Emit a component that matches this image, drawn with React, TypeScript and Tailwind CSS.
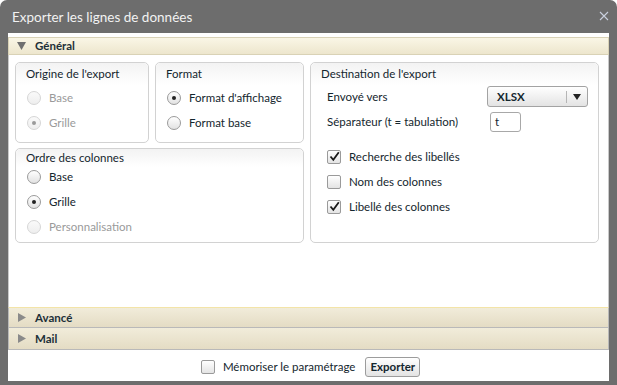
import React from "react";

const F = { fontFamily: "Lato, 'Open Sans', sans-serif" };

function Radio({ checked, disabled }: { checked?: boolean; disabled?: boolean }) {
  return (
    <span
      className={
        "w-[14px] h-[14px] rounded-full border flex items-center justify-center shrink-0 " +
        (disabled
          ? "border-[#d6d6d6] bg-gradient-to-b from-[#fafafa] to-[#eeeeee]"
          : "border-[#9a9a9a] bg-gradient-to-b from-[#ffffff] to-[#e2e2e2]")
      }
    >
      {checked && (
        <span className={"w-[4px] h-[4px] rounded-full " + (disabled ? "bg-[#9a9a9a]" : "bg-[#222]")} />
      )}
    </span>
  );
}

function Check({ checked }: { checked?: boolean }) {
  return (
    <span className="w-[14px] h-[14px] rounded-[2px] border border-[#9a9a9a] bg-gradient-to-b from-[#ffffff] to-[#e4e4e4] flex items-center justify-center shrink-0">
      {checked && (
        <svg width="11" height="11" viewBox="0 0 11 11">
          <path d="M1.5 5.5 L4.3 8.8 L9.8 1.2" fill="none" stroke="#1a1a1a" strokeWidth="1.8" />
        </svg>
      )}
    </span>
  );
}

function Group({ title, className, children, titleH = "h-[22px]" }: { title: string; className?: string; children?: React.ReactNode; titleH?: string }) {
  return (
    <div className={"border border-[#d2d2d2] rounded-[5px] bg-white flex flex-col " + (className || "")}>
      <div className={"rounded-t-[5px] bg-gradient-to-b from-[#f3f3f3] to-[#ffffff] px-[10px] flex items-center text-[11.5px] text-[#14262e] " + titleH}>
        {title}
      </div>
      {children}
    </div>
  );
}

function Row({ children, className }: { children: React.ReactNode; className?: string }) {
  return <div className={"flex items-center h-[25px] " + (className || "")}>{children}</div>;
}

export default function App() {
  return (
    <div style={F} className="w-[617px] h-[385px] bg-[#6d6d6d] rounded-t-[7px] flex flex-col overflow-hidden">
      <div className="h-[33px] flex items-center justify-between pl-[12px] pr-[8px] shrink-0">
        <span className="text-[13.5px] text-[#f2f2f2] mt-[1px]">Exporter les lignes de données</span>
        <svg width="10" height="10" viewBox="0 0 10 10" className="mt-[-2px]">
          <path d="M1 1 L9 9 M9 1 L1 9" stroke="#c9d0de" strokeWidth="1.1" />
        </svg>
      </div>
      <div className="flex-1 mx-[8px] mb-[4px] bg-white flex flex-col pt-[4px]">
        {/* Général header */}
        <div className="h-[18px] border border-[#d9d2b6] bg-gradient-to-b from-[#faf6e6] to-[#ede6cd] flex items-center pl-[8px]">
          <svg width="9" height="8" viewBox="0 0 9 8" className="mr-[9px]">
            <path d="M0 0 H9 L4.5 8 Z" fill="#6f6f6f" />
          </svg>
          <span className="text-[11.5px] font-bold text-[#1d3038]">Général</span>
        </div>
        {/* Général content */}
        <div className="h-[252px] border-x border-[#c9c9c9] pl-[6px] pr-[9px] pt-[7px] grid grid-cols-2 gap-x-[6px]">
          <div className="flex flex-col gap-[5px] h-[181px]">
            <div className="flex gap-[6px] h-[81px]">
              <Group title="Origine de l'export" className="w-[134px]">
                <div className="pl-[11px] text-[11.5px] text-[#9a9a9a]">
                  <Row>
                    <Radio disabled />
                    <span className="ml-[8px]">Base</span>
                  </Row>
                  <Row>
                    <Radio disabled checked />
                    <span className="ml-[8px]">Grille</span>
                  </Row>
                </div>
              </Group>
              <Group title="Format" className="flex-1">
                <div className="pl-[11px] text-[11.5px] text-[#14262e]">
                  <Row>
                    <Radio checked />
                    <span className="ml-[8px]">Format d'affichage</span>
                  </Row>
                  <Row>
                    <Radio />
                    <span className="ml-[8px]">Format base</span>
                  </Row>
                </div>
              </Group>
            </div>
            <Group title="Ordre des colonnes" className="flex-1" titleH="h-[18px]">
              <div className="pl-[11px] mt-[-3px] text-[11.5px] text-[#14262e]">
                <Row>
                  <Radio />
                  <span className="ml-[8px]">Base</span>
                </Row>
                <Row>
                  <Radio checked />
                  <span className="ml-[8px]">Grille</span>
                </Row>
                <Row className="text-[#9a9a9a]">
                  <Radio disabled />
                  <span className="ml-[8px]">Personnalisation</span>
                </Row>
              </div>
            </Group>
          </div>
          <Group title="Destination de l'export" className="h-[181px]">
            <div className="pl-[16px] pr-[10px] mt-[-1px] text-[11.5px] text-[#14262e]">
              <Row className="justify-between">
                <span>Envoyé vers</span>
                <div className="w-[101px] h-[21px] rounded-[3px] border border-[#a3a3a3] bg-gradient-to-b from-[#ffffff] to-[#e3e3e3] flex items-center">
                  <span className="pl-[9px] font-bold flex-1 text-[11.5px]">XLSX</span>
                  <span className="w-px h-[12px] bg-[#b5b5b5]" />
                  <svg width="8" height="6" viewBox="0 0 8 6" className="mx-[6px]">
                    <path d="M0 0 H8 L4 6 Z" fill="#222" />
                  </svg>
                </div>
              </Row>
              <Row>
                <span className="w-[163px]">Séparateur (t = tabulation)</span>
                <div className="w-[31px] h-[20px] rounded-[3px] border border-[#a8a8a8] bg-white flex items-center pl-[4px]">t</div>
              </Row>
              <div className="h-[10px]" />
              <Row>
                <Check checked />
                <span className="ml-[8px]">Recherche des libellés</span>
              </Row>
              <Row>
                <Check />
                <span className="ml-[8px]">Nom des colonnes</span>
              </Row>
              <Row>
                <Check checked />
                <span className="ml-[8px]">Libellé des colonnes</span>
              </Row>
            </div>
          </Group>
        </div>
        {/* Avancé */}
        <div className="h-[21px] border border-[#b9b9b9] border-t-[#f3e4a8] bg-gradient-to-b from-[#f1ecda] to-[#e4dcc4] flex items-center pl-[9px]">
          <svg width="8" height="9" viewBox="0 0 8 9" className="mr-[9px]">
            <path d="M0 0 V9 L8 4.5 Z" fill="#8a8a8a" />
          </svg>
          <span className="text-[11.5px] font-bold text-[#1d3038]">Avancé</span>
        </div>
        <div className="h-[22px] border border-t-0 border-[#b9b9b9] bg-gradient-to-b from-[#f1ecda] to-[#e4dcc4] flex items-center pl-[9px]">
          <svg width="8" height="9" viewBox="0 0 8 9" className="mr-[9px]">
            <path d="M0 0 V9 L8 4.5 Z" fill="#8a8a8a" />
          </svg>
          <span className="text-[11.5px] font-bold text-[#1d3038]">Mail</span>
        </div>
        {/* footer */}
        <div className="flex-1 flex items-center justify-center text-[11.5px] text-[#14262e] pt-[2px] pl-[4px]">
          <Check />
          <span className="ml-[8px]">Mémoriser le paramétrage</span>
          <button className="ml-[10px] h-[20px] px-[4px] rounded-[3px] border border-[#9c9c9c] bg-gradient-to-b from-[#ffffff] to-[#e3e3e3] font-bold text-[11.5px] text-[#14262e]">
            Exporter
          </button>
        </div>
      </div>
    </div>
  );
}
